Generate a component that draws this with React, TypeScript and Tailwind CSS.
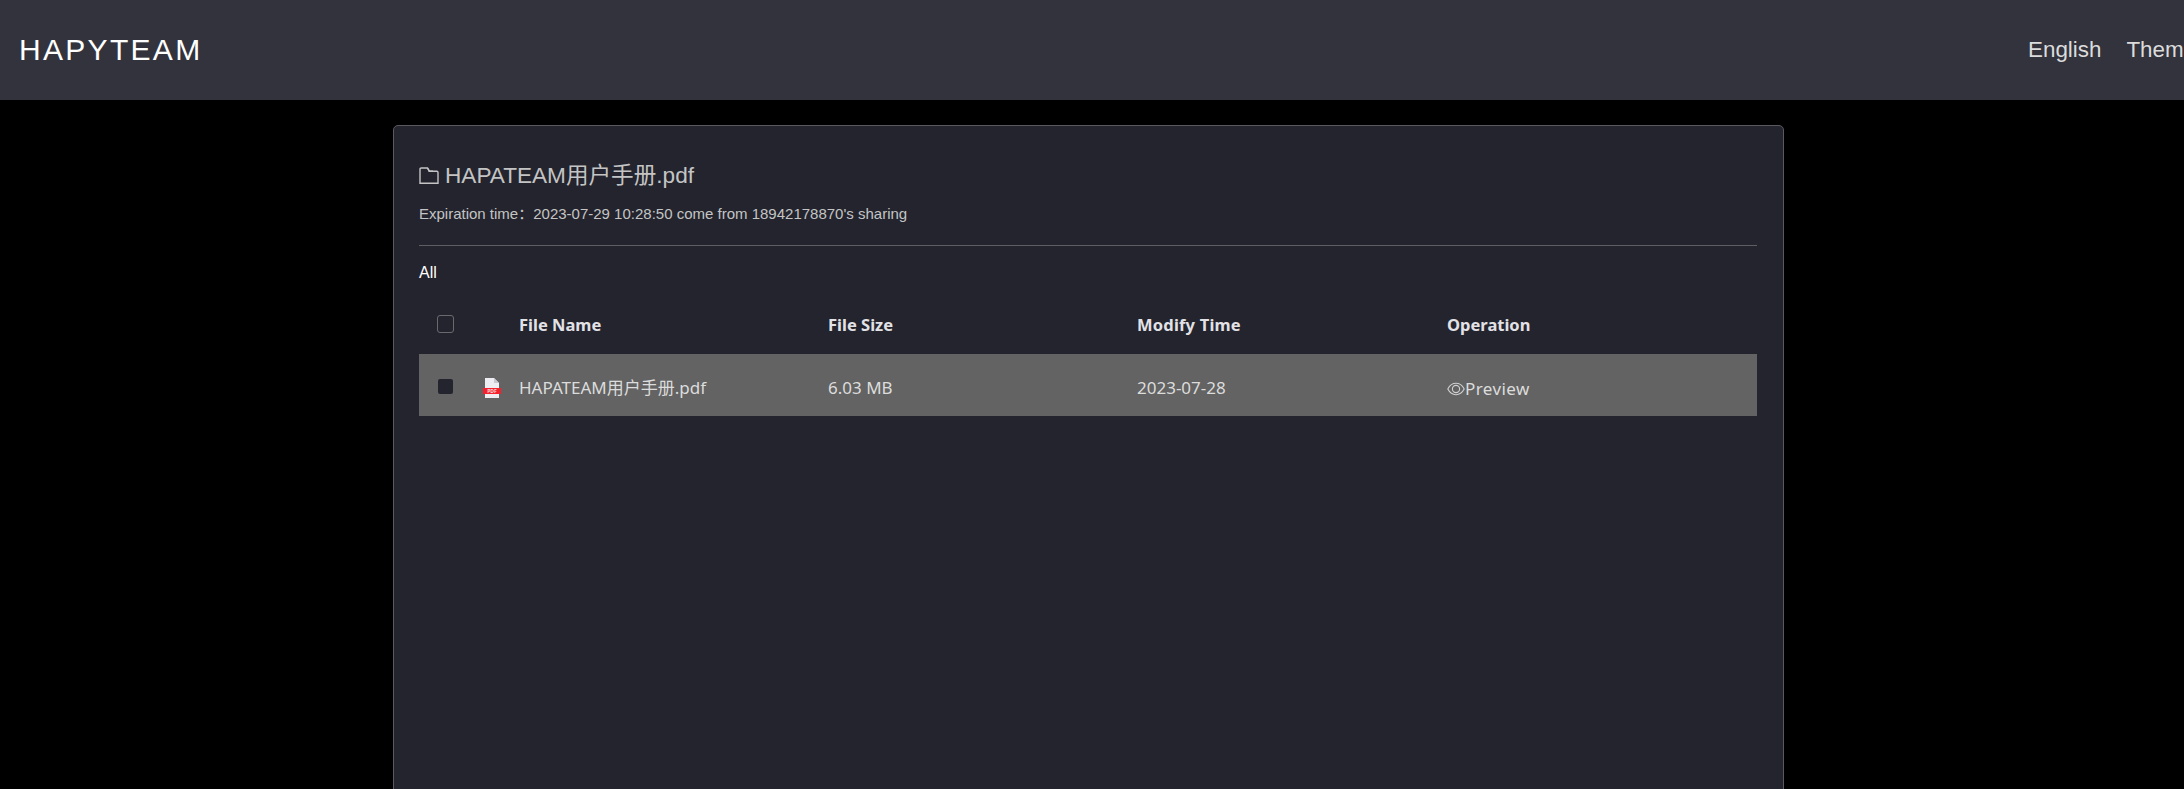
const rowGrid = 'grid grid-cols-[100px_309px_309px_310px_1fr]';

function FolderIcon() {
  return (
    <svg width="20" height="18" viewBox="0 0 20 18" fill="none" stroke="#c4c4c4" strokeWidth="1.4" className="shrink-0">
      <path d="M1 16.3V2.2C1 1.500 1.500 1 2.200 1h6.300l1.800 3.200h7.500c.7 0 1.200.5 1.200 1.200v10.900H1z" />
      <path d="M8.500 1l1.800 3.200H14" />
    </svg>
  );
}

function EyeIcon() {
  return (
    <svg width="18" height="14" viewBox="0 0 18 14" fill="none" stroke="#d0d0d0" strokeWidth="1.1" className="shrink-0">
      <path d="M.8 7C2.800 3.200 5.600 1.300 9 1.300s6.200 1.900 8.200 5.700c-2 3.800-4.800 5.700-8.200 5.700S2.800 10.800.8 7z" />
      <circle cx="9" cy="7" r="3.600" />
    </svg>
  );
}

function PdfIcon() {
  return (
    <svg width="18" height="20" viewBox="0 0 18 20" className="shrink-0">
      <path d="M2 0h9l5 5v15H2z" fill="#eeeef2" />
      <path d="M11 0l5 5h-5z" fill="#c9c9d2" />
      <rect x="0" y="10" width="18" height="6" fill="#f5222d" />
      <text x="9" y="15" textAnchor="middle" fontSize="5" fontWeight="700" fill="#ffd9d9">PDF</text>
    </svg>
  );
}

export default function App() {
  return (
    <div className="h-screen overflow-hidden bg-black font-['Liberation_Sans','Noto_Sans_CJK_SC',sans-serif]">
      <nav className="flex h-[100px] items-center justify-between bg-[#32333d] pb-[1px] pl-[19px]">
        <span className="text-[30px] tracking-[2.300px] text-white">HAPYTEAM</span>
        <div className="flex w-[156px] shrink-0 gap-[25px] overflow-hidden text-[22.400px] whitespace-nowrap text-[#dcdcdc]">
          <span>English</span>
          <span>Theme</span>
        </div>
      </nav>

      <main className="mt-[25px] ml-[393px] h-[800px] w-[1391px] rounded-[5px] border border-[#5a5a5e] bg-[#23242e] pt-[37px] pr-[26px] pl-[25px]">
        <h1 className="flex items-center gap-[6px] text-[22.600px] leading-[26px] text-[#c4c4c4]">
          <FolderIcon />
          HAPATEAM用户手册.pdf
        </h1>
        <p className="mt-[15px] text-[15px] leading-[20px] text-[#c4c4c4]">
          Expiration time：2023-07-29 10:28:50 come from 18942178870's sharing
        </p>
        <hr className="mt-[21px] border-[#5f5f63]" />
        <div className="mt-[17px] text-[16px] leading-[20px] text-white">All</div>

        <div className={`${rowGrid} mt-[16px] h-[55px] items-center pb-[2px] font-['Noto_Sans','Noto_Sans_CJK_SC',sans-serif] text-[16.500px] font-bold text-[#e2e2e6]`}>
          <div className="pb-[4px] pl-[18px]">
            <div className="h-[18px] w-[17px] rounded-[3px] border border-[#6a6a6e]" />
          </div>
          <div>File Name</div>
          <div>File Size</div>
          <div className="tracking-[0.200px]">Modify Time</div>
          <div>Operation</div>
        </div>

        <div className={`${rowGrid} h-[62px] items-center bg-[#636363] font-['Noto_Sans','Noto_Sans_CJK_SC',sans-serif] text-[17px] text-[#dcdcdc]`}>
          <div className="flex items-center pl-[19px]">
            <div className="mt-[2px] h-[15px] w-[15px] rounded-[2px] bg-[#23242e]" />
            <div className="mt-[5px] ml-[30px]">
              <PdfIcon />
            </div>
          </div>
          <div className="mt-[5px]">HAPATEAM用户手册.pdf</div>
          <div className="mt-[5px]">6.03 MB</div>
          <div className="mt-[5px]">2023-07-28</div>
          <div className="mt-[8px] flex items-center tracking-[0.400px]">
            <EyeIcon />
            Preview
          </div>
        </div>
      </main>
    </div>
  );
}
